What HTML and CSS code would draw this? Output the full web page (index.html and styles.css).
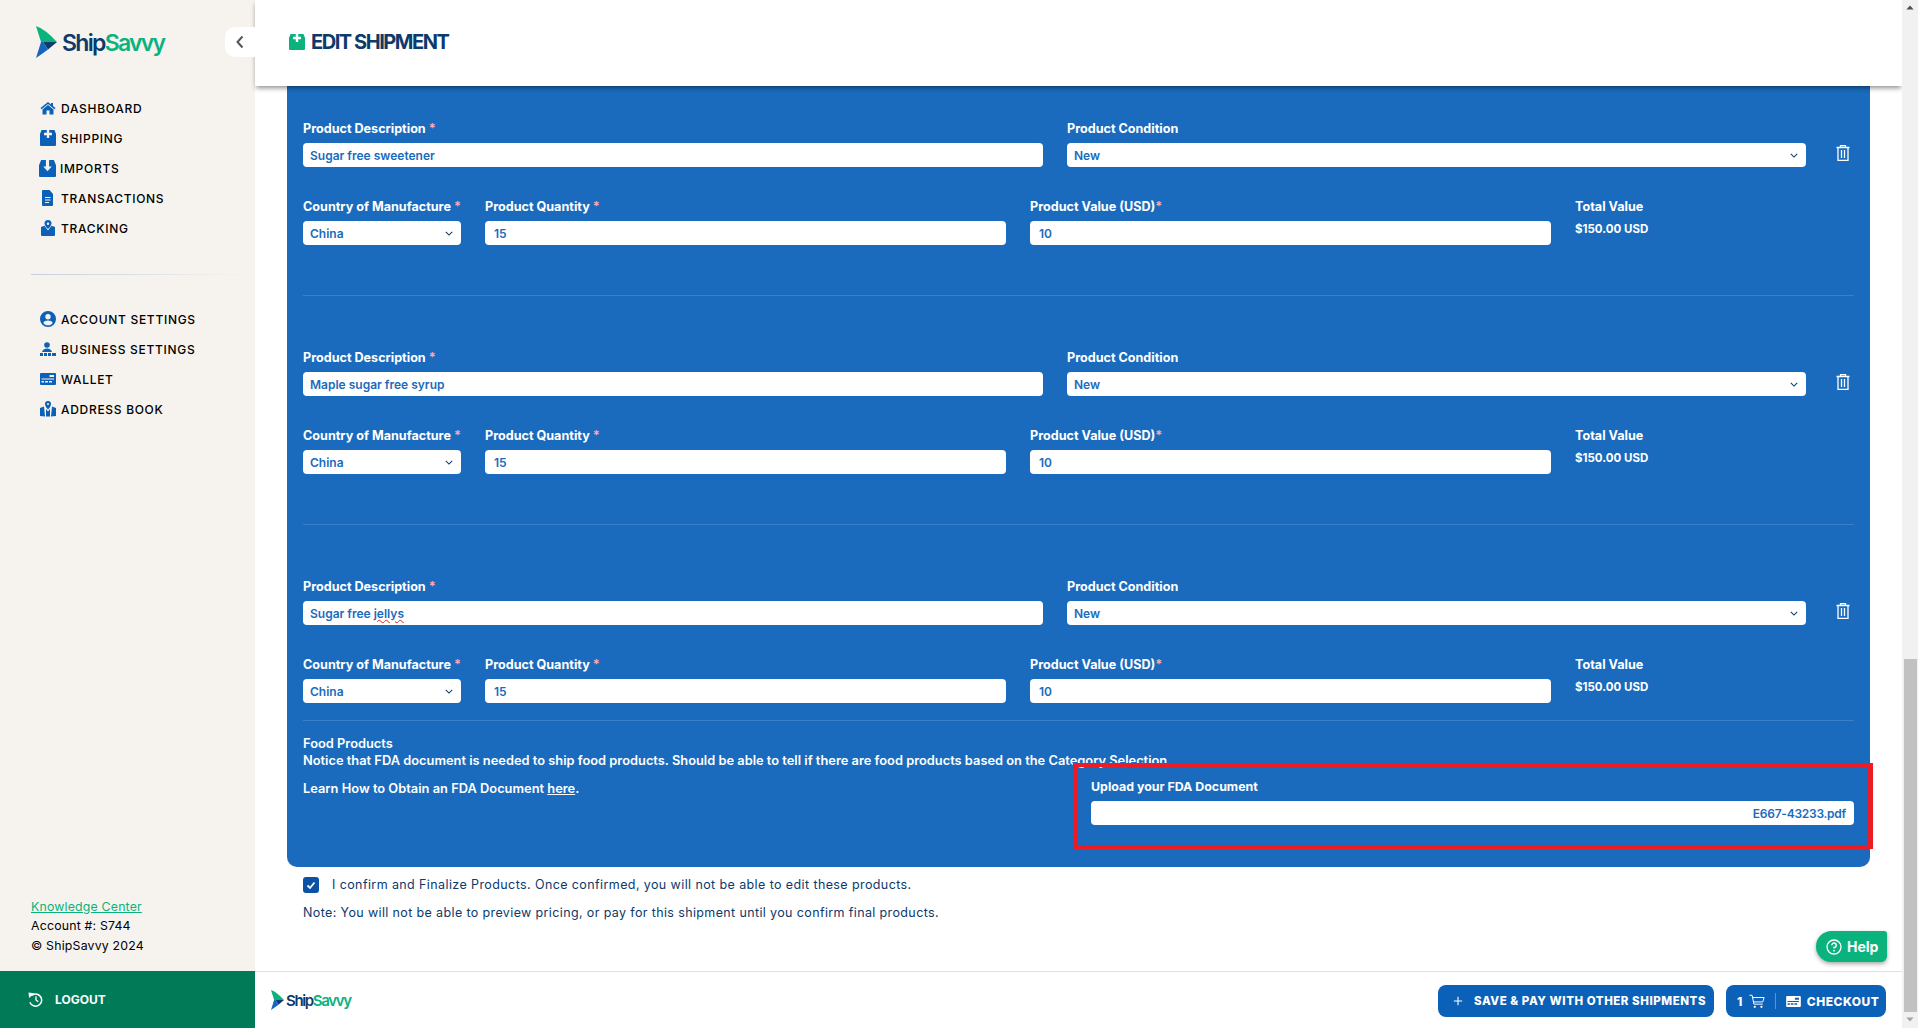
FILE: index.html
```html
<!DOCTYPE html>
<html lang="en">
<head>
<meta charset="utf-8">
<title>Edit Shipment - ShipSavvy</title>
<link rel="stylesheet" href="styles.css">
</head>
<body>
<svg class="defs" aria-hidden="true">
  <symbol id="mark" viewBox="0 0 21 32"><path d="M0 0 Q9 3 21 16 H5 Z" fill="#0ab27d"/><path d="M7 16 H21 L12 23.500 Z" fill="#0d3a6b"/><path d="M5 16 H7 L12 23.500 Q6 28 0 32 Z" fill="#1565c0"/></symbol>
  <symbol id="chev" viewBox="0 0 10 6"><path d="M1 1 L5 5 L9 1" fill="none" stroke="#0d3a6b" stroke-width="1.300"/></symbol>
  <symbol id="trash" viewBox="0 0 14 16"><path fill="none" stroke="#fff" stroke-width="1.300" d="M0.500 2.500 H13.500 M4.500 2.500 V0.700 H9.500 V2.500 M2 2.500 V15.300 H12 V2.500 M5.500 5 V13 M8.500 5 V13"/></symbol>
  <symbol id="box-up" viewBox="0 0 16 16"><path fill-rule="evenodd" d="M1.500 0 H14.500 L16 4 V15 Q16 16 15 16 H1 Q0 16 0 15 V4 Z M6.800 0 V2.800 H4 V5.200 H6.800 V8 H9.200 V5.200 H12 V2.800 H9.200 V0 Z"/></symbol>
</svg>
<div class="app">
  <aside class="sidebar">
    <div class="brand">
      <svg class="brand-mark"><use href="#mark"/></svg>
      <span class="brand-text"><span class="brand-ship">Ship</span><span class="brand-savvy">Savvy</span></span>
    </div>
    <nav class="nav">
      <a class="nav-item"><svg class="nav-icon" viewBox="0 0 16 16"><path d="M8 2 L0.500 8 L1.500 9.200 L8 4 L14.500 9.200 L15.500 8 L13 6 V3 H11 V4.400 Z M8 5 L2.500 9.400 V14.500 H6.500 V10.500 H9.500 V14.500 H13.500 V9.400 Z"/></svg>DASHBOARD</a>
      <a class="nav-item"><svg class="nav-icon"><use href="#box-up"/></svg>SHIPPING</a>
      <a class="nav-item"><svg class="nav-icon nav-icon-lg" viewBox="0 0 16 16"><path fill-rule="evenodd" d="M2 0 H14 L16 5 V15 Q16 16 15 16 H1 Q0 16 0 15 V5 Z M6.500 0 H9.500 V6 H12 L8 10.500 L4 6 H6.500 Z"/></svg>IMPORTS</a>
      <a class="nav-item"><svg class="nav-icon" viewBox="0 0 16 16"><path fill-rule="evenodd" d="M3 0 H9.500 L13 4 V15 Q13 16 12 16 H3 Q2 16 2 15 V1 Q2 0 3 0 Z M5 7 V8 H10.500 V7 Z M5 9.500 V10.500 H10.500 V9.500 Z M5 12 V13 H9 V12 Z"/></svg>TRANSACTIONS</a>
      <a class="nav-item"><svg class="nav-icon" viewBox="0 0 16 16"><path fill-rule="evenodd" d="M8 0 A3.500 3.500 0 0 1 11.500 3.500 C11.500 5.500 9 8 8 9 C7 8 4.500 5.500 4.500 3.500 A3.500 3.500 0 0 1 8 0 Z M8 2.500 A1.200 1.200 0 1 0 8 4.900 A1.200 1.200 0 1 0 8 2.500 Z M1 7 L4.500 5.800 L8 10.500 L11.500 5.800 L15 7 V15 Q15 16 14 16 H2 Q1 16 1 15 Z"/></svg>TRACKING</a>
    </nav>
    <hr class="side-rule">
    <nav class="nav">
      <a class="nav-item"><svg class="nav-icon" viewBox="0 0 16 16"><path fill-rule="evenodd" d="M8 0 A8 8 0 1 1 8 16 A8 8 0 1 1 8 0 Z M8 3 A2.700 2.700 0 1 0 8 8.400 A2.700 2.700 0 1 0 8 3 Z M3.300 12 C4.300 13.400 6 14.300 8 14.300 C10 14.300 11.700 13.400 12.700 12 C12 10.400 10.400 9.600 8 9.600 C5.600 9.600 4 10.400 3.300 12 Z"/></svg>ACCOUNT SETTINGS</a>
      <a class="nav-item"><svg class="nav-icon" viewBox="0 0 16 16"><circle cx="7" cy="4" r="2.800"/><path d="M2 11 Q3 7.500 7 7.500 Q11 7.500 12 11 Z M0 12 H3 V15 H0 Z M4 12 H7 V15 H4 Z M8 12 H11 V15 H8 Z M12 12 H16 V15 H12 Z"/></svg>BUSINESS SETTINGS</a>
      <a class="nav-item"><svg class="nav-icon" viewBox="0 0 16 16"><path fill-rule="evenodd" d="M1 2 H15 Q16 2 16 3 V13 Q16 14 15 14 H1 Q0 14 0 13 V3 Q0 2 1 2 Z M9.500 4 V6 H14 V4 Z M1.500 7.500 V8.500 H14 V7.500 Z M1.500 10 V11.500 H4 V10 Z M5 10 V11.500 H8 V10 Z M9 10 V11.500 H12 V10 Z"/></svg>WALLET</a>
      <a class="nav-item"><svg class="nav-icon" viewBox="0 0 16 16"><path fill-rule="evenodd" d="M8 0 A3 3 0 0 1 11 3 C11 5 9 7.500 8 8.500 C7 7.500 5 5 5 3 A3 3 0 0 1 8 0 Z M8 2 A1 1 0 1 0 8 4 A1 1 0 1 0 8 2 Z M0 7 L4 5.500 L5 15.500 L0 15 Z M6 8 L8 10.500 L10 8 V15.500 L6 15.500 Z M12 5.500 L16 7 V15 L11 15.500 Z"/></svg>ADDRESS BOOK</a>
    </nav>
    <div class="side-meta">
      <a class="kb-link">Knowledge Center</a>
      <span>Account #: S744</span>
      <span>© ShipSavvy 2024</span>
    </div>
    <a class="logout"><svg class="logout-icon" viewBox="0 0 16 16"><path d="M3.500 4 A6.500 6.500 0 1 1 2 11" fill="none" stroke="#fff" stroke-width="1.600"/><path d="M0.500 0.500 L6.500 1.200 L1.200 6.500 Z" fill="#fff"/><path d="M8.500 4.500 V8.500 L11 10.500" fill="none" stroke="#fff" stroke-width="1.400"/></svg>LOGOUT</a>
  </aside>

  <div class="main">
    <header class="topbar">
      <button class="collapse"><svg viewBox="0 0 10 14"><path d="M7.500 1.500 L2.500 7 L7.500 12.500" fill="none" stroke="#555" stroke-width="2"/></svg></button>
      <svg class="title-icon"><use href="#box-up"/></svg>
      <h1 class="title">EDIT SHIPMENT</h1>
    </header>

    <div class="content">
      <section class="panel">
        <div class="product">
          <div class="row-top">
            <div><div class="label">Product Description<span class="req">*</span></div><div class="field">Sugar free sweetener</div></div>
            <div><div class="label">Product Condition</div><div class="field select">New<svg class="chev"><use href="#chev"/></svg></div></div>
            <div class="trash-cell"><svg class="trash"><use href="#trash"/></svg></div>
          </div>
          <div class="row-bottom">
            <div><div class="label">Country of Manufacture<span class="req">*</span></div><div class="field select">China<svg class="chev"><use href="#chev"/></svg></div></div>
            <div><div class="label">Product Quantity<span class="req">*</span></div><div class="field num">15</div></div>
            <div><div class="label">Product Value (USD)<span class="req tight">*</span></div><div class="field num">10</div></div>
            <div><div class="label">Total Value</div><div class="total">$150.00 USD</div></div>
          </div>
        </div>
        <div class="product">
          <div class="row-top">
            <div><div class="label">Product Description<span class="req">*</span></div><div class="field">Maple sugar free syrup</div></div>
            <div><div class="label">Product Condition</div><div class="field select">New<svg class="chev"><use href="#chev"/></svg></div></div>
            <div class="trash-cell"><svg class="trash"><use href="#trash"/></svg></div>
          </div>
          <div class="row-bottom">
            <div><div class="label">Country of Manufacture<span class="req">*</span></div><div class="field select">China<svg class="chev"><use href="#chev"/></svg></div></div>
            <div><div class="label">Product Quantity<span class="req">*</span></div><div class="field num">15</div></div>
            <div><div class="label">Product Value (USD)<span class="req tight">*</span></div><div class="field num">10</div></div>
            <div><div class="label">Total Value</div><div class="total">$150.00 USD</div></div>
          </div>
        </div>
        <div class="product last">
          <div class="row-top">
            <div><div class="label">Product Description<span class="req">*</span></div><div class="field">Sugar free <span class="misspelt">jellys</span></div></div>
            <div><div class="label">Product Condition</div><div class="field select">New<svg class="chev"><use href="#chev"/></svg></div></div>
            <div class="trash-cell"><svg class="trash"><use href="#trash"/></svg></div>
          </div>
          <div class="row-bottom">
            <div><div class="label">Country of Manufacture<span class="req">*</span></div><div class="field select">China<svg class="chev"><use href="#chev"/></svg></div></div>
            <div><div class="label">Product Quantity<span class="req">*</span></div><div class="field num">15</div></div>
            <div><div class="label">Product Value (USD)<span class="req tight">*</span></div><div class="field num">10</div></div>
            <div><div class="label">Total Value</div><div class="total">$150.00 USD</div></div>
          </div>
        </div>
        <div class="food">
          <div class="food-text">Food Products<br>Notice that FDA document is needed to ship food products. Should be able to tell if there are food products based on the Category Selection.</div>
          <div class="food-row">
            <div class="food-learn">Learn How to Obtain an FDA Document <a class="here">here</a>.</div>
            <div class="upload">
              <div class="label">Upload your FDA Document</div>
              <div class="field file">E667-43233.pdf</div>
              <div class="highlight"></div>
            </div>
          </div>
        </div>
      </section>
      <div class="confirm"><span class="checkbox"><svg viewBox="0 0 12 12"><path d="M2.500 6.500 L5 9 L9.500 3.500" fill="none" stroke="#fff" stroke-width="1.800"/></svg></span>I confirm and Finalize Products. Once confirmed, you will not be able to edit these products.</div>
      <p class="note">Note: You will not be able to preview pricing, or pay for this shipment until you confirm final products.</p>
    </div>

    <footer class="footer">
      <div class="foot-brand">
        <svg class="foot-mark"><use href="#mark"/></svg>
        <span class="foot-text"><span class="brand-ship">Ship</span><span class="brand-savvy">Savvy</span></span>
      </div>
      <div class="actions">
        <button class="btn btn-save"><svg class="plus" viewBox="0 0 12 12"><path d="M6 1 V11 M1 6 H11" stroke="#fff" stroke-width="1.300"/></svg>SAVE &amp; PAY WITH OTHER SHIPMENTS</button>
        <button class="btn btn-checkout">1<svg class="cart" viewBox="0 0 18 16"><path d="M0.500 1 H3.500 L5.500 11 H15.500 M4 3.500 H17 L15.500 8.500 H5" fill="none" stroke="#fff" stroke-width="1.100"/><circle cx="6.500" cy="14" r="1.300" fill="#fff"/><circle cx="14" cy="14" r="1.300" fill="#fff"/></svg><span class="btn-sep"></span><svg class="card" viewBox="0 0 16 12"><path fill="#fff" fill-rule="evenodd" d="M1 0 H15 Q16 0 16 1 V11 Q16 12 15 12 H1 Q0 12 0 11 V1 Q0 0 1 0 Z M9.500 2 V4 H14 V2 Z M1.500 5.500 V6.500 H14 V5.500 Z M1.500 8 V9.500 H4 V8 Z M5 8 V9.500 H8 V8 Z M9 8 V9.500 H12 V8 Z"/></svg>CHECKOUT</button>
      </div>
    </footer>
    <a class="help"><svg class="help-icon" viewBox="0 0 16 16"><circle cx="8" cy="8" r="7" fill="none" stroke="#fff" stroke-width="1.300"/><path d="M5.800 6.200 A2.200 2.200 0 1 1 8 8.400 V9.600" fill="none" stroke="#fff" stroke-width="1.400"/><circle cx="8" cy="11.700" r="0.900" fill="#fff"/></svg>Help</a>
  </div>

  <div class="scrollbar">
    <svg class="sb-arrow" viewBox="0 0 10 6"><path d="M5 0.500 L9.500 5.500 H0.500 Z" fill="#505050"/></svg>
    <div class="sb-track"><div class="sb-thumb"></div></div>
    <svg class="sb-arrow" viewBox="0 0 10 6"><path d="M5 5.500 L9.500 0.500 H0.500 Z" fill="#a3a3a3"/></svg>
  </div>
</div>
</body>
</html>
```

FILE: styles.css
```css
* { box-sizing: border-box; }
html, body { margin: 0; height: 100%; overflow: hidden; }
body { font-family: "Inter", "Liberation Sans", sans-serif; background: #fff; color: #0d3a6b; }
.defs { display: none; }
.app { display: grid; grid-template-columns: 255px 1fr 16px; height: 1028px; }

/* Sidebar */
.sidebar { background: #f6f3ee; display: flex; flex-direction: column; min-height: 0; }
.brand { display: flex; align-items: flex-start; gap: 5px; padding: 26px 0 0 36px; height: 93px; }
.brand-mark { width: 21px; height: 32px; flex: none; }
.brand-text { font-size: 23px; font-weight: 600; letter-spacing: -1.700px; line-height: 32px; margin-top: 1px; }
.brand-ship { color: #0d3a6b; }
.brand-savvy { color: #0ab27d; }
.nav { display: flex; flex-direction: column; padding-left: 40px; }
.nav-item { display: flex; align-items: center; gap: 5px; height: 30px; color: #000; font-size: 12px; font-weight: 500; letter-spacing: 0.700px; white-space: nowrap; }
.nav-icon { width: 16px; height: 16px; fill: #0b60b8; flex: none; }
.nav-icon-lg { width: 17px; height: 17px; margin: 0 -1px 0 -1px; }
.side-rule { border: 0; height: 1px; margin: 31px 5px 29px 31px; background: linear-gradient(90deg, #c5d0dd, #f6f3ee); }
.side-meta { margin-top: auto; padding: 0 0 16px 31px; display: flex; flex-direction: column; font-size: 12.300px; line-height: 19.500px; color: #000; letter-spacing: 0.200px; }
.kb-link { color: #0ab27d; text-decoration: underline; }
.logout { display: flex; align-items: center; gap: 12px; height: 57px; padding-left: 28px; background: #007a57; color: #fff; font-size: 12px; font-weight: 700; }
.logout-icon { width: 15px; height: 15px; }

/* Main */
.main { position: relative; display: flex; flex-direction: column; min-width: 0; }
.topbar { position: relative; z-index: 2; display: flex; align-items: flex-start; height: 86px; padding: 33px 0 0 34px; background: #fff; box-shadow: 0 3px 5px -1px rgba(0,0,0,.45); }
.collapse { position: absolute; left: -30px; top: 27px; width: 30px; height: 30px; padding: 0 0 0 10px; border: 0; border-radius: 10px 0 0 10px; background: #fff; display: flex; align-items: center; }
.collapse svg { width: 10px; height: 14px; }
.title-icon { width: 16px; height: 16px; fill: #0ab27d; margin: 1px 6px 0 0; }
.title { margin: 0; font-size: 20px; line-height: 18px; font-weight: 700; color: #0d3a6b; letter-spacing: -1.450px; }
.content { flex: 1; min-height: 0; overflow: hidden; }
.panel { margin: 0 32px 0; padding: 35px 16px 42px; background: #1a6bbd; border-radius: 0 0 10px 10px; color: #fff; }
.product { padding-bottom: 50px; margin-bottom: 54px; border-bottom: 1px solid #3a80c8; }
.product.last { padding-bottom: 17px; margin-bottom: 14px; }
.row-top { display: grid; grid-template-columns: 740px 739px 48px; column-gap: 24px; margin-bottom: 32px; }
.row-bottom { display: grid; grid-template-columns: 158px 521px 521px 1fr; column-gap: 24px; }
.label { height: 16px; margin-bottom: 6px; font-size: 12.600px; line-height: 16px; font-weight: 700; white-space: nowrap; }
.req { color: #f3a9b8; margin-left: 3px; }
.req.tight { margin-left: 0; }
.field { display: flex; align-items: center; height: 24px; padding: 0 8px 0 7px; background: #fff; border-radius: 4px; color: #1a6bbd; font-size: 12px; font-weight: 600; white-space: pre; }
.field.num { padding-left: 9px; }
.select { justify-content: space-between; }
.chev { width: 8px; height: 5px; }
.misspelt { text-decoration: underline wavy #e02020 1px; text-underline-offset: 1px; }
.trash-cell { display: flex; justify-content: flex-start; padding: 24px 0 0 6px; }
.trash { width: 14px; height: 16px; }
.total { font-size: 11.500px; font-weight: 700; line-height: 16px; }
.food { font-size: 12.850px; font-weight: 600; line-height: 17px; }
.food-text { white-space: nowrap; }
.food-row { display: flex; justify-content: space-between; margin-top: 10px; }
.food-learn { padding-top: 1px; }
.here { color: #fff; text-decoration: underline; }
.upload { position: relative; width: 763px; }
.upload .label { font-size: 12.400px; }
.file { justify-content: flex-end; letter-spacing: -0.250px; }
.highlight { position: absolute; top: -16px; right: -19px; bottom: -24px; left: -18px; border: solid #ed1c24; border-width: 4px 5px; pointer-events: none; }
.confirm { display: flex; align-items: center; gap: 13px; margin: 10px 0 0 48px; height: 16px; font-size: 12.500px; line-height: 16px; letter-spacing: 0.400px; }
.checkbox { width: 16px; height: 16px; border-radius: 3px; background: #0b52a6; display: flex; align-items: center; justify-content: center; }
.checkbox svg { width: 12px; height: 12px; }
.note { margin: 12px 0 0 48px; font-size: 12.500px; line-height: 16px; letter-spacing: 0.370px; }

/* Footer */
.footer { display: flex; justify-content: space-between; align-items: center; flex: none; height: 57px; padding: 0 16px; border-top: 1px solid #e0e0e0; background: #fff; }
.foot-brand { display: flex; align-items: center; gap: 2px; }
.foot-mark { width: 13px; height: 20px; }
.foot-text { font-size: 15px; font-weight: 600; letter-spacing: -1.350px; }
.actions { display: flex; gap: 12px; margin-top: 2px; }
.btn { display: flex; align-items: center; height: 32px; border: 0; border-radius: 8px; background: #0b60b8; color: #fff; font-family: inherit; font-size: 12px; font-weight: 800; letter-spacing: 0.500px; white-space: nowrap; }
.btn-save { width: 276px; padding: 0 0 0 15px; font-size: 11.500px; letter-spacing: 0.550px; }
.plus { width: 10px; height: 10px; margin-right: 11px; }
.btn-checkout { width: 160px; padding: 0 0 0 11px; }
.cart { width: 16px; height: 15px; margin: 0 0 0 6px; }
.btn-sep { width: 1px; height: 16px; margin: 0 10px; background: #5b93d0; }
.card { width: 15px; height: 11px; margin-right: 6px; }
.help { position: absolute; z-index: 3; left: 1561px; top: 931px; display: flex; align-items: center; gap: 5px; width: 71px; height: 31px; padding-left: 10px; background: #0ab27d; color: #fff; border-radius: 16px 3px 6px 16px; font-size: 14px; font-weight: 700; box-shadow: 0 2px 4px rgba(0,0,0,.35); }
.help-icon { width: 16px; height: 16px; }

/* Scrollbar */
.scrollbar { position: relative; z-index: 3; display: flex; flex-direction: column; background: #f1f1f1; }
.sb-arrow { width: 8px; height: 5px; margin: 5px auto 6px; flex: none; }
.sb-track { position: relative; flex: 1; }
.sb-thumb { position: absolute; left: 2px; right: 1px; top: 643px; height: 353px; background: #c1c1c1; }
```
